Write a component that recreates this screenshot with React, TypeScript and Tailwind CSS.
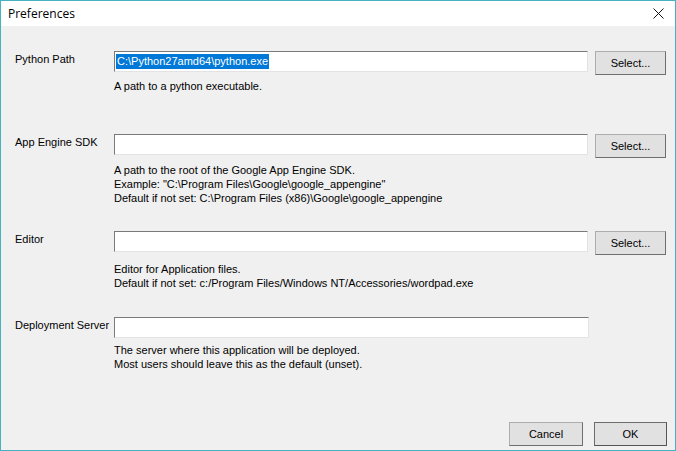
import React from 'react';

const font = { fontFamily: '"Liberation Sans", Arial, sans-serif' };

function TextBox({ value, selected, wide }: { value?: string; selected?: boolean; wide?: boolean }) {
  return (
    <div
      className={`h-[21px] shrink-0 bg-white border border-t-[#7a7a7a] border-l-[#7a7a7a] border-r-[#e3e3e3] border-b-[#e3e3e3] flex items-center pl-[1px] ${wide ? 'w-[475px]' : 'w-[474px]'}`}
    >
      {value && (
        <span className={`text-[11px] leading-[15px] px-[1px] ${selected ? 'bg-[#0078d7] text-white' : 'text-black'}`}>
          {value}
        </span>
      )}
    </div>
  );
}

function Button({ label, primary, w }: { label: string; primary?: boolean; w: string }) {
  return (
    <div
      className={`h-[24px] ${w} shrink-0 flex items-center justify-center bg-[#e1e1e1] text-[11px] text-black border ${
        primary ? 'border-[#6d6d6d] border-r-[#555] border-b-[#555]' : 'border-[#adadad] border-r-[#6f6f6f] border-b-[#6f6f6f]'
      }`}
    >
      {label}
    </div>
  );
}

function Row({
  label,
  value,
  selected,
  button = true,
  lines,
  top,
  gap,
}: {
  label: string;
  value?: string;
  selected?: boolean;
  button?: boolean;
  lines: string[];
  top: string;
  gap: string;
}) {
  return (
    <div className={`flex flex-col ${top}`}>
      <div className="flex items-start">
        <div className="w-[113px] shrink-0 whitespace-nowrap pl-[14px] text-[11px] leading-[14px] pt-[1px] text-black">
          {label}
        </div>
        <TextBox value={value} selected={selected} wide={!button} />
        {button && (
          <div className="ml-[7px]">
            <Button label="Select..." w="w-[71px]" />
          </div>
        )}
      </div>
      <div className={`ml-[113px] ${gap} text-[11px] leading-[14px] text-black`}>
        {lines.map((l) => (
          <div key={l}>{l}</div>
        ))}
      </div>
    </div>
  );
}

export default function App() {
  return (
    <div className="w-[676px] h-[451px] border border-[#46b2c0] bg-[#f0f0f0] flex flex-col overflow-hidden" style={font}>
      <div className="h-[25px] bg-white flex items-center justify-between pl-[7px] pr-[11px] shrink-0">
        <span className="text-[12px] text-black" style={{ fontFamily: '"Open Sans", "Liberation Sans", sans-serif' }}>
          Preferences
        </span>
        <svg width="11" height="11" viewBox="0 0 11 11">
          <path d="M0.5 0.5 L10.5 10.5 M10.5 0.5 L0.5 10.5" stroke="#111" strokeWidth="1" />
        </svg>
      </div>
      <div className="flex-1 flex flex-col">
        <Row
          top="mt-[25px]"
          gap="mt-[4px]"
          label="Python Path"
          value="C:\Python27amd64\python.exe"
          selected
          lines={['A path to a python executable.']}
        />
        <Row
          top="mt-[41px]"
          gap="mt-[5px]"
          label="App Engine SDK"
          lines={[
            'A path to the root of the Google App Engine SDK.',
            'Example: "C:\\Program Files\\Google\\google_appengine"',
            'Default if not set: C:\\Program Files (x86)\\Google\\google_appengine',
          ]}
        />
        <Row
          top="mt-[26px]"
          gap="mt-[7px]"
          label="Editor"
          lines={[
            'Editor for Application files.',
            'Default if not set: c:/Program Files/Windows NT/Accessories/wordpad.exe',
          ]}
        />
        <Row
          top="mt-[27px]"
          gap="mt-[5px]"
          label="Deployment Server"
          button={false}
          lines={[
            'The server where this application will be deployed.',
            'Most users should leave this as the default (unset).',
          ]}
        />
        <div className="flex-1" />
        <div className="flex justify-end gap-[11px] pr-[8px] pb-[4px]">
          <Button label="Cancel" w="w-[74px]" />
          <Button label="OK" primary w="w-[73px]" />
        </div>
      </div>
    </div>
  );
}
